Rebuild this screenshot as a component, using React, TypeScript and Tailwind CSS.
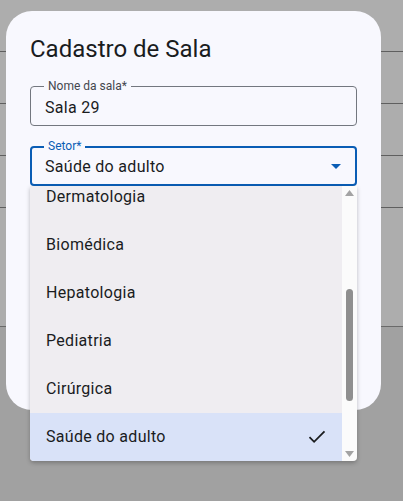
import React from "react";

const items = ["Dermatologia", "Biomédica", "Hepatologia", "Pediatria", "Cirúrgica", "Saúde do adulto"];

export default function App() {
  return (
    <div className="relative w-[403px] h-[501px] overflow-hidden bg-[#a1a1a1]" style={{ fontFamily: "Roboto, 'Noto Sans', sans-serif" }}>
      {/* background table behind backdrop */}
      <div className="flex flex-col bg-[#adadad]">
        <div className="h-[52px] border-b border-[#5f5f5f]" />
        <div className="h-[52px] border-b border-[#5f5f5f]" />
        <div className="h-[52px] border-b border-[#5f5f5f]" />
        <div className="h-[52px] border-b border-[#5f5f5f]" />
        <div className="h-[119px] border-b border-[#6a6a6a]" />
      </div>

      {/* dialog */}
      <div className="absolute left-[6px] top-[11px] w-[375px] h-[399px] rounded-[26px] bg-[#f8f8fe] px-[24px] pt-[22px]">
        <h2 className="text-[24px] leading-[32px] text-[#1a1c1e] font-normal">Cadastro de Sala</h2>
        <div className="mt-[21px] relative h-[40px] w-[327px] rounded-[4px] border border-[#73777f]">
          <span className="absolute left-[13px] -top-[9px] bg-[#f8f8fe] px-[4px] text-[12px] leading-[16px] text-[#44474e]">Nome da sala*</span>
          <div className="pl-[14px] pt-[3px] h-full flex items-center text-[16px] text-[#1a1c1e] tracking-[0.3px]">Sala 29</div>
        </div>
        <div className="mt-[20px] relative h-[40px] w-[327px] rounded-[4px] border-2 border-[#0a5db5]">
          <span className="absolute left-[12px] -top-[10px] bg-[#f8f8fe] px-[4px] text-[12px] leading-[16px] text-[#0a5db5]">Setor*</span>
          <div className="pl-[13px] pr-[14px] h-full flex items-center justify-between text-[16px] text-[#1a1c1e] tracking-[0.3px]">
            <span className="pt-[2px]">Saúde do adulto</span>
            <svg width="10" height="5" viewBox="0 0 10 5"><path d="M0 0h10L5 5z" fill="#0a5db5" /></svg>
          </div>
        </div>
      </div>

      {/* dropdown menu */}
      <div className="absolute left-[30px] top-[186px] w-[327px] h-[275px] flex rounded-b-[4px] overflow-hidden shadow-[0_2px_4px_rgba(0,0,0,0.25)]">
        <div className="flex-1 overflow-hidden bg-[#efedf1]">
          <div className="-mt-[13px] flex flex-col">
            {items.map((it, i) => {
              const sel = i === items.length - 1;
              return (
                <div key={it} className={`h-[48px] flex items-center justify-between pl-[16px] pr-[16px] text-[16px] text-[#1a1c1e] tracking-[0.3px] ${sel ? "bg-[#d9e2f8]" : ""}`}>
                  <span>{it}</span>
                  {sel && (
                    <svg width="18" height="14" viewBox="0 0 18 14"><path d="M1.5 7.2l4.6 4.6L16.5 1.4" fill="none" stroke="#1a1c1e" strokeWidth="1.8" /></svg>
                  )}
                </div>
              );
            })}
          </div>
        </div>
        <div className="w-[15px] bg-[#fbfbfb] flex flex-col items-center">
          <svg className="mt-[4px]" width="9" height="6" viewBox="0 0 9 6"><path d="M4.5 0L9 6H0z" fill="#a3a3a3" /></svg>
          <div className="mt-[93px] w-[7px] h-[112px] rounded-full bg-[#8f8f8f]" />
          <svg className="mt-[50px]" width="9" height="6" viewBox="0 0 9 6"><path d="M0 0h9L4.5 6z" fill="#a3a3a3" /></svg>
        </div>
      </div>
    </div>
  );
}
